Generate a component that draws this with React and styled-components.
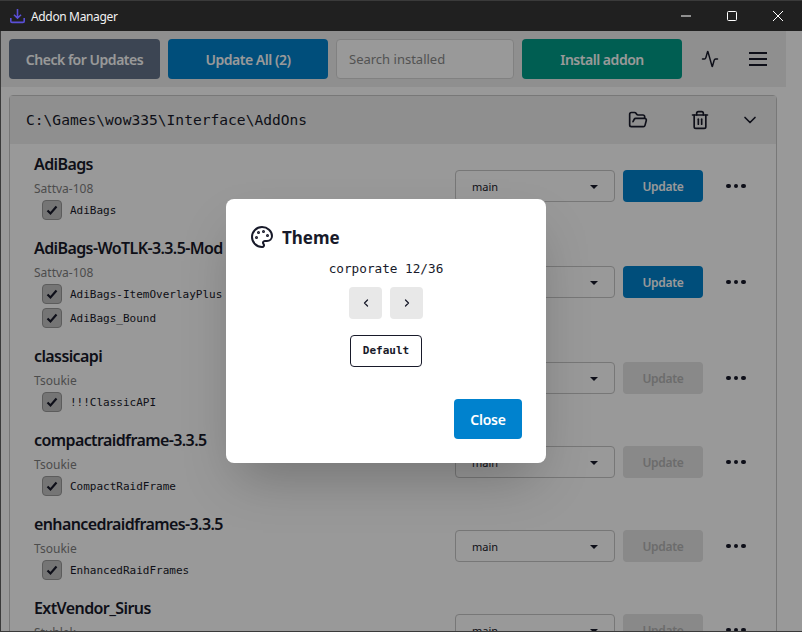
import styled, { createGlobalStyle } from 'styled-components';
import { Activity, FolderOpen, Trash2, ChevronDown, ChevronLeft, ChevronRight, Palette } from 'lucide-react';

const addons = [
  { name: 'AdiBags', author: 'Sattva-108', folders: ['AdiBags'], canUpdate: true },
  { name: 'AdiBags-WoTLK-3.3.5-Mod', author: 'Sattva-108', folders: ['AdiBags-ItemOverlayPlus', 'AdiBags_Bound'], canUpdate: true },
  { name: 'classicapi', author: 'Tsoukie', folders: ['!!!ClassicAPI'] },
  { name: 'compactraidframe-3.3.5', author: 'Tsoukie', folders: ['CompactRaidFrame'] },
  { name: 'enhancedraidframes-3.3.5', author: 'Tsoukie', folders: ['EnhancedRaidFrames'] },
  { name: 'ExtVendor_Sirus', author: 'Stuhlek', folders: ['ExtVendor'] },
];

const GlobalStyle = createGlobalStyle`
  html, body {
    margin: 0;
    height: 100%;
    overflow: hidden;
    background: #fff;
  }
  * {
    box-sizing: border-box;
  }
`;

const Window = styled.div`
  position: relative;
  width: 802px;
  height: 632px;
  overflow: hidden;
  display: flex;
  flex-direction: column;
  font-family: "Noto Sans", "Open Sans", sans-serif;
  color: #181a2a;
  background: #fff;
`;

const TitleBar = styled.div`
  flex: none;
  height: 31px;
  display: flex;
  align-items: center;
  background: #202020;
  color: #f2f2f2;
  font-size: 12px;
  letter-spacing: -0.35px;
  padding: 0 1px 0 10px;
  gap: 6px;
  border-top: 1px solid #3a3a3a;
`;

const TitleText = styled.span`
  flex: 1;
`;

const WinButton = styled.div`
  width: 46px;
  height: 30px;
  margin-left: -6px;
  display: flex;
  align-items: center;
  justify-content: center;
`;

const Main = styled.div`
  flex: 1;
  min-height: 0;
  width: 785px;
  margin-left: 1px;
`;

const Toolbar = styled.div`
  display: flex;
  gap: 8px;
  padding: 8px;
  height: 56px;
  background: #eeeeee;
`;

const Button = styled.div`
  width: ${(p) => p.$width}px;
  height: 40px;
  border-radius: 4px;
  background: ${(p) => p.$bg};
  color: #fff;
  font-size: 14px;
  font-weight: 600;
  letter-spacing: -0.47px;
  display: flex;
  align-items: center;
  justify-content: center;
`;

const Search = styled.div`
  width: 178px;
  height: 40px;
  border: 1px solid #d8d8d8;
  border-radius: 4px;
  background: #fff;
  color: #8a8a8a;
  font-size: 13px;
  padding-left: 12px;
  display: flex;
  align-items: center;
`;

const IconButton = styled.div`
  width: 40px;
  height: 40px;
  display: flex;
  align-items: center;
  justify-content: center;
  color: #181a2a;
`;

const Panel = styled.div`
  margin: 8px 0 0 8px;
  width: 768px;
  border: 1px solid #c8c8c8;
  border-radius: 4px;
`;

const PanelHead = styled.div`
  height: 48px;
  display: flex;
  align-items: center;
  background: #eeeeee;
  padding: 0 7px 0 16px;
`;

const PathText = styled.div`
  flex: 1;
  padding-bottom: 2px;
  font-family: "DejaVu Sans Mono", "Liberation Mono", monospace;
  font-size: 14.6px;
`;

const HeadIcon = styled.div`
  display: flex;
  width: ${(p) => p.$width || 62}px;
  justify-content: center;
`;

const Rows = styled.div`
  display: flex;
  flex-direction: column;
  gap: 12px;
  padding: 6px 7px 0 24px;
`;

const Row = styled.div`
  display: flex;
  align-items: center;
`;

const Info = styled.div`
  flex: 1;
  min-width: 0;
`;

const Name = styled.div`
  font-size: 16px;
  font-weight: 600;
  line-height: 28px;
  letter-spacing: -0.6px;
`;

const Author = styled.div`
  font-size: 12px;
  line-height: 22px;
  height: 20px;
  color: #7f7f7f;
`;

const FolderRow = styled.div`
  display: flex;
  align-items: center;
  height: 24px;
  padding-left: 8px;
  gap: 8px;
`;

const Check = styled.div`
  width: 20px;
  height: 20px;
  border: 1px solid #9a9a9a;
  border-radius: 4px;
  background: #c4c4c4;
  display: flex;
  align-items: center;
  justify-content: center;
`;

const FolderName = styled.span`
  font-family: "DejaVu Sans Mono", "Liberation Mono", monospace;
  font-size: 11px;
`;

const Select = styled.div`
  width: 160px;
  height: 32px;
  border: 1px solid #c6c6c6;
  border-radius: 4px;
  display: flex;
  align-items: center;
  padding-left: 16px;
  font-size: 11px;
  position: relative;
`;

const Caret = styled.span`
  position: absolute;
  right: 16px;
  top: 14px;
  border-left: 4px solid transparent;
  border-right: 4px solid transparent;
  border-top: 4px solid #181a2a;
`;

const UpdateButton = styled.div`
  width: 80px;
  height: 32px;
  margin-left: 8px;
  border-radius: 4px;
  background: ${(p) => (p.$active ? '#0082ce' : '#e4e4e4')};
  color: ${(p) => (p.$active ? '#fff' : '#b4b4b4')};
  font-size: 12px;
  font-weight: 600;
  letter-spacing: -0.3px;
  display: flex;
  align-items: center;
  justify-content: center;
`;

const Dots = styled.div`
  width: 66px;
  display: flex;
  justify-content: center;
  gap: 3px;
`;

const Dot = styled.span`
  width: 4.5px;
  height: 4.5px;
  border-radius: 50%;
  background: #181a2a;
`;

const Overlay = styled.div`
  position: absolute;
  left: 0;
  right: 0;
  top: 31px;
  bottom: 0;
  background: rgba(0, 0, 0, 0.4);
  display: flex;
  align-items: center;
  justify-content: center;
  padding-right: 31px;
  border-left: 1px solid #3a3a3a;
  border-bottom: 1px solid #3a3a3a;
`;

const Dialog = styled.div`
  width: 320px;
  height: 264px;
  background: #fff;
  border-radius: 8px;
  padding: 24px;
  display: flex;
  flex-direction: column;
  box-shadow: 0 25px 50px -12px rgba(0, 0, 0, 0.25);
`;

const DialogTitle = styled.div`
  display: flex;
  align-items: center;
  gap: 8px;
  font-size: 17px;
  font-weight: 700;
  height: 28px;
`;

const ThemeName = styled.div`
  margin-top: 8px;
  text-align: center;
  font-family: "DejaVu Sans Mono", "Liberation Mono", monospace;
  font-size: 12.7px;
  line-height: 20px;
`;

const Arrows = styled.div`
  margin-top: 8px;
  display: flex;
  justify-content: center;
  gap: 8px;
`;

const ArrowButton = styled.div`
  width: 33px;
  height: 32px;
  border-radius: 4px;
  background: #e8e8e8;
  display: flex;
  align-items: center;
  justify-content: center;
`;

const DefaultButton = styled.div`
  align-self: center;
  margin-top: 16px;
  width: 72px;
  height: 32px;
  border: 1px solid #181a2a;
  border-radius: 4px;
  font-family: "DejaVu Sans Mono", "Liberation Mono", monospace;
  font-size: 11px;
  font-weight: 700;
  padding-bottom: 2px;
  display: flex;
  align-items: center;
  justify-content: center;
`;

const CloseButton = styled.div`
  align-self: flex-end;
  margin-top: auto;
  width: 68px;
  height: 40px;
  border-radius: 4px;
  background: #0082ce;
  color: #fff;
  font-size: 14px;
  font-weight: 600;
  letter-spacing: -0.2px;
  display: flex;
  align-items: center;
  justify-content: center;
`;

const AppIcon = () => (
  <svg width="15" height="16" viewBox="0 0 15 16" fill="none" stroke="#5a4fd8" strokeWidth="1.6">
    <path d="M7.5 1v9M4 6.8l3.5 3.4L11 6.8M.8 10v3.2c0 .7.5 1.2 1.2 1.2h11c.7 0 1.2-.5 1.2-1.2V10" />
  </svg>
);

const MenuIcon = () => (
  <svg width="18" height="16" viewBox="0 0 18 16" fill="none" stroke="currentColor" strokeWidth="2">
    <path d="M0 2h18M0 8h18M0 14h18" />
  </svg>
);

const App = () => (
  <Window>
    <GlobalStyle />
    <TitleBar>
      <AppIcon />
      <TitleText>Addon Manager</TitleText>
      <WinButton>
        <svg width="10" height="10" fill="none" stroke="#fff"><path d="M0 5h10" /></svg>
      </WinButton>
      <WinButton>
        <svg width="10" height="10" fill="none" stroke="#fff"><rect x=".5" y=".5" width="9" height="9" rx="1" /></svg>
      </WinButton>
      <WinButton>
        <svg width="10" height="10" fill="none" stroke="#fff"><path d="M0 0l10 10M10 0 0 10" /></svg>
      </WinButton>
    </TitleBar>
    <Main>
      <Toolbar>
        <Button $width={151} $bg="#64748b">Check for Updates</Button>
        <Button $width={160} $bg="#0082ce">Update All (2)</Button>
        <Search>Search installed</Search>
        <Button $width={160} $bg="#009d89">Install addon</Button>
        <IconButton><Activity size={18} /></IconButton>
        <IconButton><MenuIcon /></IconButton>
      </Toolbar>
      <Panel>
        <PanelHead>
          <PathText>C:\Games\wow335\Interface\AddOns</PathText>
          <HeadIcon><FolderOpen size={20} /></HeadIcon>
          <HeadIcon><Trash2 size={20} /></HeadIcon>
          <HeadIcon $width={38}><ChevronDown size={20} /></HeadIcon>
        </PanelHead>
        <Rows>
          {addons.map((addon) => (
            <Row key={addon.name}>
              <Info>
                <Name>{addon.name}</Name>
                <Author>{addon.author}</Author>
                {addon.folders.map((folder) => (
                  <FolderRow key={folder}>
                    <Check>
                      <svg width="14" height="14" viewBox="0 0 14 14" fill="none" stroke="#181a2a" strokeWidth="2.2">
                        <path d="M2.5 7.5 5.5 10.5 11.5 3.5" />
                      </svg>
                    </Check>
                    <FolderName>{folder}</FolderName>
                  </FolderRow>
                ))}
              </Info>
              <Select>main<Caret /></Select>
              <UpdateButton $active={addon.canUpdate}>Update</UpdateButton>
              <Dots><Dot /><Dot /><Dot /></Dots>
            </Row>
          ))}
        </Rows>
      </Panel>
    </Main>
    <Overlay>
      <Dialog>
        <DialogTitle><Palette size={24} />Theme</DialogTitle>
        <ThemeName>corporate 12/36</ThemeName>
        <Arrows>
          <ArrowButton><ChevronLeft size={12} strokeWidth={2.5} /></ArrowButton>
          <ArrowButton><ChevronRight size={12} strokeWidth={2.5} /></ArrowButton>
        </Arrows>
        <DefaultButton>Default</DefaultButton>
        <CloseButton>Close</CloseButton>
      </Dialog>
    </Overlay>
  </Window>
);

export default App;
